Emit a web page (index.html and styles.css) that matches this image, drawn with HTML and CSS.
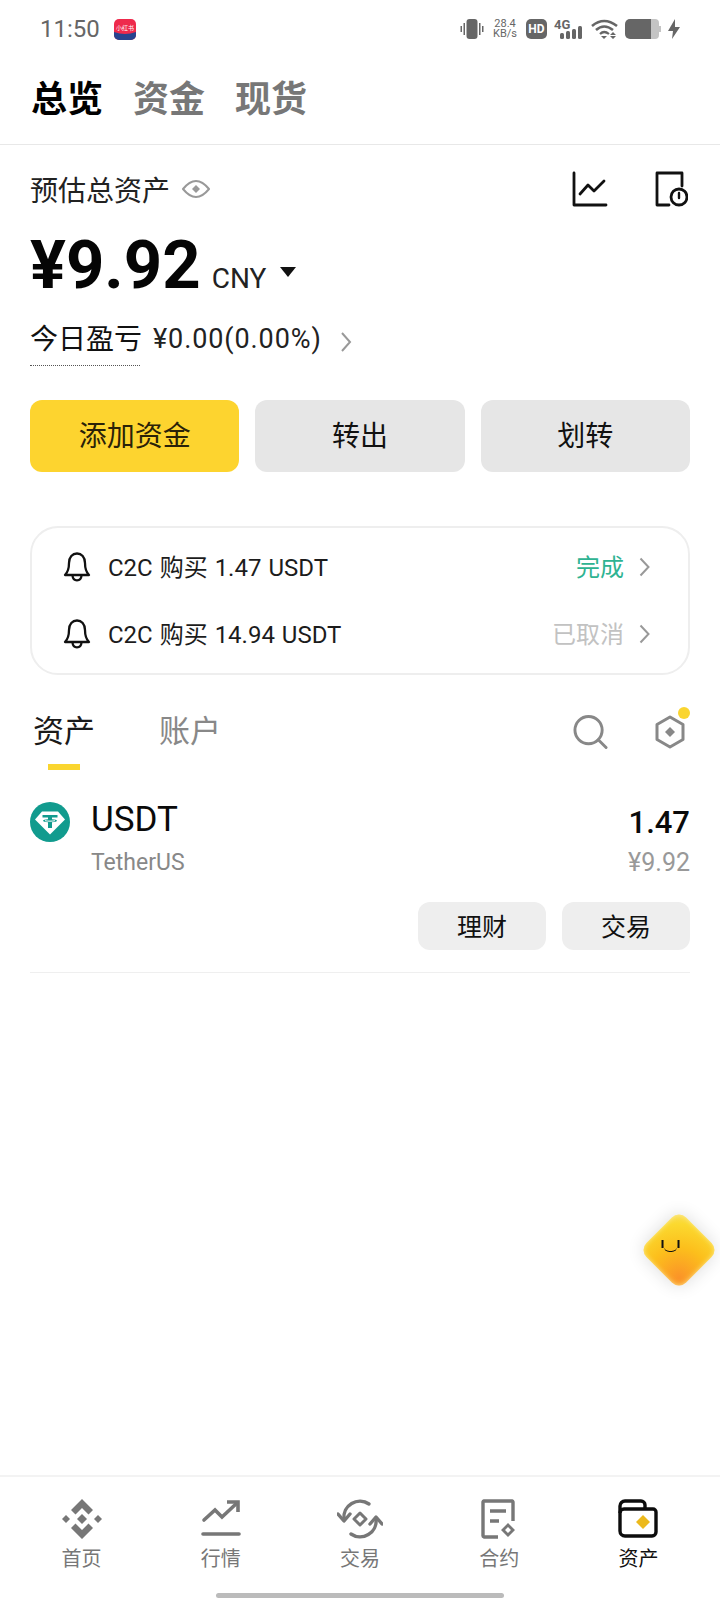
FILE: index.html
```html
<!DOCTYPE html>
<html lang="zh-CN">
<head>
    <meta charset="UTF-8">
    <meta name="viewport" content="width=device-width, initial-scale=1.0">
    <title>资产总览</title>
    <link rel="stylesheet" href="styles.css">
</head>
<body>
    <div class="status-bar">
        <span class="clock">11:50</span>
        <svg class="app-badge" width="22" height="21" viewBox="0 0 22 21">
            <rect width="22" height="21" rx="5" fill="#ee2a4c"/>
            <path d="M0 13 Q11 17 22 13 V16 A5 5 0 0 1 17 21 H5 A5 5 0 0 1 0 16Z" fill="#27448f"/>
            <text x="11" y="11" text-anchor="middle" class="app-badge-text">小红书</text>
        </svg>
        <div class="status-right">
            <svg width="24" height="20" viewBox="0 0 24 20" fill="#666">
                <rect x="6.5" y="0" width="11" height="20" rx="3"/>
                <rect x="0.5" y="7" width="1.5" height="6"/>
                <rect x="3.5" y="4" width="1.5" height="12"/>
                <rect x="19" y="4" width="1.5" height="12"/>
                <rect x="22" y="7" width="1.5" height="6"/>
            </svg>
            <div class="net-speed"><span>28.4</span><span>KB/s</span></div>
            <div class="hd-badge">HD</div>
            <svg width="30" height="28" viewBox="0 -4 30 28" fill="#666">
                <text x="0" y="10" class="net-type">4G</text>
                <rect x="6" y="14" width="4" height="6" rx="1.5"/>
                <rect x="12" y="12" width="4" height="8" rx="1.5"/>
                <rect x="18" y="10" width="4" height="10" rx="1.5"/>
                <rect x="24" y="7" width="4" height="13" rx="1.5"/>
            </svg>
            <svg width="27" height="20" viewBox="0 0 27 20" fill="none" stroke="#666" stroke-width="2.6">
                <path d="M1 7 Q13 -3 26 7"/>
                <path d="M5 11 Q13 4 22 11"/>
                <path d="M9 15 Q13 11 18 15" stroke-width="2.2"/>
                <path d="M10 17 H16 L13 20Z" fill="#666" stroke="none"/>
                <path d="M22 13 L25 16 H19Z M19 17 H25 L22 20Z" fill="#666" stroke="none"/>
            </svg>
            <svg width="36" height="20" viewBox="0 0 36 20">
                <path d="M26 0 H5 A5 5 0 0 0 0 5 V15 A5 5 0 0 0 5 20 H26Z" fill="#666"/>
                <path d="M26 0 H30 A4 4 0 0 1 34 4 V7 H36 V13 H34 V16 A4 4 0 0 1 30 20 H26Z" fill="#c4c4c4"/>
            </svg>
            <svg width="12" height="20" viewBox="0 0 12 20" fill="#666">
                <path d="M7 0 L0 12 H5 L4 20 L12 8 H7Z"/>
            </svg>
        </div>
    </div>

    <nav class="top-tabs">
        <span class="top-tab active">总览</span>
        <span class="top-tab">资金</span>
        <span class="top-tab">现货</span>
    </nav>

    <main class="content">
        <section class="summary">
            <div class="summary-head">
                <div class="summary-title">
                    <span>预估总资产</span>
                    <svg width="28" height="22" viewBox="0 0 28 22" fill="none" stroke="#999" stroke-width="2">
                        <path d="M1 11 Q14 -5 27 11 Q14 27 1 11Z"/>
                        <path d="M14 7 L18 11 L14 15 L10 11Z" fill="#999" stroke="none"/>
                    </svg>
                </div>
                <div class="summary-icons">
                    <svg width="36" height="36" viewBox="0 0 36 36" fill="none" stroke="#111" stroke-width="2.8" stroke-linecap="round" stroke-linejoin="round">
                        <path d="M2 2 V34 H34"/>
                        <path d="M8 23 L16 14 L22 20 L32 10"/>
                    </svg>
                    <svg width="34" height="36" viewBox="0 0 34 36" fill="none" stroke="#111" stroke-width="2.8" stroke-linecap="round" stroke-linejoin="round">
                        <path d="M15 34 H3 V2 H28 V15"/>
                        <circle cx="25" cy="26" r="8"/>
                        <path d="M25 22 V27" stroke-width="2.4"/>
                    </svg>
                </div>
            </div>
            <div class="balance">
                <span class="balance-value">¥9.92</span>
                <span class="balance-unit">CNY</span>
                <span class="balance-caret"></span>
            </div>
            <div class="pnl">
                <span class="pnl-label">今日盈亏</span>
                <span class="pnl-value">¥0.00(0.00%)</span>
                <svg width="12" height="22" viewBox="0 0 12 22" fill="none" stroke="#999" stroke-width="2"><path d="M2 2 L10 11 L2 20"/></svg>
            </div>
            <div class="actions">
                <button class="action primary">添加资金</button>
                <button class="action">转出</button>
                <button class="action">划转</button>
            </div>
        </section>

        <section class="orders">
            <div class="order">
                <svg width="28" height="30" viewBox="0 0 28 30" fill="none" stroke="#111" stroke-width="2.3" stroke-linejoin="round">
                    <path d="M2 23 C6 19 6 15 6 11 C6 5 9.5 1.5 14 1.5 C18.5 1.5 22 5 22 11 C22 15 22 19 26 23Z"/>
                    <path d="M9.5 23.5 C10 30 18 30 18.5 23.5"/>
                </svg>
                <span class="order-text">C2C 购买 1.47 USDT</span>
                <span class="order-status done">完成</span>
                <svg width="11" height="20" viewBox="0 0 11 20" fill="none" stroke="#999" stroke-width="2"><path d="M1.5 1.5 L9.5 10 L1.5 18.5"/></svg>
            </div>
            <div class="order">
                <svg width="28" height="30" viewBox="0 0 28 30" fill="none" stroke="#111" stroke-width="2.3" stroke-linejoin="round">
                    <path d="M2 23 C6 19 6 15 6 11 C6 5 9.5 1.5 14 1.5 C18.5 1.5 22 5 22 11 C22 15 22 19 26 23Z"/>
                    <path d="M9.5 23.5 C10 30 18 30 18.5 23.5"/>
                </svg>
                <span class="order-text">C2C 购买 14.94 USDT</span>
                <span class="order-status">已取消</span>
                <svg width="11" height="20" viewBox="0 0 11 20" fill="none" stroke="#999" stroke-width="2"><path d="M1.5 1.5 L9.5 10 L1.5 18.5"/></svg>
            </div>
        </section>

        <div class="asset-tabs">
            <span class="asset-tab active">资产</span>
            <span class="asset-tab">账户</span>
            <div class="asset-tools">
                <svg width="35" height="36" viewBox="0 0 36 36" fill="none" stroke="#888" stroke-width="3" stroke-linecap="round">
                    <circle cx="16" cy="16" r="14"/>
                    <path d="M26 26 L34 34"/>
                </svg>
                <div class="hex-tool">
                    <svg width="30" height="34" viewBox="0 0 30 34" fill="none" stroke="#888" stroke-width="3" stroke-linejoin="round">
                        <path d="M15 2 L28 9.5 V24.5 L15 32 L2 24.5 V9.5Z"/>
                        <path d="M15 12 L20 17 L15 22 L10 17Z" fill="#888" stroke="none"/>
                    </svg>
                    <span class="hex-dot"></span>
                </div>
            </div>
        </div>

        <section class="asset">
            <div class="asset-row">
                <svg class="coin" width="40" height="40" viewBox="0 0 40 40">
                    <circle cx="20" cy="20" r="20" fill="#119b8e"/>
                    <path d="M12 9.5 H28 L35 17.5 L20 32.5 L5 17.5Z" fill="#fff"/>
                    <path d="M12.5 13 H27.5 V15.5 H22 V17.3 C25 17.5 27 18 27 18.8 C27 19.6 25 20.1 22 20.3 V26 H18 V20.3 C15 20.1 13 19.6 13 18.8 C13 18 15 17.5 18 17.3 V15.5 H12.5Z" fill="#119b8e"/>
                    <path d="M15 18.7 C17 19.3 23 19.3 25 18.7" fill="none" stroke="#fff" stroke-width="1"/>
                </svg>
                <div class="asset-name">
                    <div class="asset-symbol">USDT</div>
                    <div class="asset-full">TetherUS</div>
                </div>
                <div class="asset-amount">
                    <div class="asset-qty">1.47</div>
                    <div class="asset-fiat">¥9.92</div>
                </div>
            </div>
            <div class="asset-actions">
                <button class="chip">理财</button>
                <button class="chip">交易</button>
            </div>
        </section>
    </main>

    <div class="assistant">
        <div class="assistant-face">
            <span class="eye"></span><span class="eye"></span>
            <span class="smile"></span>
        </div>
    </div>

    <nav class="bottom-nav">
        <div class="nav-item">
            <svg width="40" height="40" viewBox="0 0 40 40" fill="#777">
                <polygon points="20,0 31,11 26.5,15.5 20,9 13.5,15.5 9,11"/>
                <polygon points="20,40 31,29 26.5,24.5 20,31 13.5,24.5 9,29"/>
                <polygon points="4,16 8,20 4,24 0,20"/>
                <polygon points="36,16 40,20 36,24 32,20"/>
                <polygon points="20,15 25,20 20,25 15,20"/>
            </svg>
            <span>首页</span>
        </div>
        <div class="nav-item">
            <svg width="40" height="40" viewBox="0 0 40 40" fill="none" stroke="#777" stroke-width="3.6" stroke-linecap="round">
                <path d="M3 21 L14 11 L21 18 L36 4"/>
                <path d="M26 3 H37 V13" stroke-linecap="butt"/>
                <path d="M2 35 H38"/>
            </svg>
            <span>行情</span>
        </div>
        <div class="nav-item">
            <svg width="46" height="40" viewBox="0 0 46 40" fill="none" stroke="#777" stroke-width="3.4" stroke-linecap="round">
                <path d="M7 20 A16 16 0 0 1 32 5"/>
                <path d="M39 20 A16 16 0 0 1 14 35"/>
                <path d="M1 15 L7 22 L13 15" stroke-linejoin="round"/>
                <path d="M33 25 L39 18 L45 25" stroke-linejoin="round"/>
                <path d="M23 14 L29 20 L23 26 L17 20Z" stroke-width="3" stroke-linejoin="round"/>
            </svg>
            <span>交易</span>
        </div>
        <div class="nav-item">
            <svg width="36" height="40" viewBox="0 0 36 40" fill="none" stroke="#777" stroke-width="3.4">
                <path d="M17 38 H3 A1.5 1.5 0 0 1 2 36.5 V3 A1.5 1.5 0 0 1 3 2 H31 A1.5 1.5 0 0 1 32 3 V22"/>
                <path d="M9 12 H25 M9 22 H18"/>
                <path d="M27 24 L34 31 L27 38 L20 31Z M27 28 L30 31 L27 34 L24 31Z" fill="#777" stroke="none" fill-rule="evenodd"/>
            </svg>
            <span>合约</span>
        </div>
        <div class="nav-item active">
            <svg width="40" height="40" viewBox="0 0 40 40" fill="none" stroke="#0c0c0c" stroke-width="3.4" stroke-linejoin="round">
                <path d="M2 14 V7 A5 5 0 0 1 7 2 H23 A4 4 0 0 1 27 6 V10"/>
                <path d="M2 14 A4 4 0 0 1 6 10 H35 A3 3 0 0 1 38 13 V33 A4 4 0 0 1 34 37 H7 A5 5 0 0 1 2 32Z"/>
                <path d="M25 16 L32 23 L25 30 L18 23Z" fill="#ecb91c" stroke="none"/>
            </svg>
            <span>资产</span>
        </div>
    </nav>
    <div class="home-bar"></div>
</body>
</html>
```

FILE: styles.css
```css
* {
    box-sizing: border-box;
}
body {
    margin: 0;
    width: 720px;
    height: 1600px;
    position: relative;
    overflow: hidden;
    background: #fff;
    color: #111;
    font-family: Roboto, "Noto Sans CJK SC", sans-serif;
    display: flex;
    flex-direction: column;
}
button {
    font-family: inherit;
    border: none;
    color: #111;
    padding: 0;
}

/* status bar */
.status-bar {
    height: 56px;
    padding: 2px 40px 0 40px;
    display: flex;
    align-items: center;
    color: #666;
}
.clock {
    font-size: 24px;
}
.app-badge {
    margin-left: 14px;
}
.app-badge-text {
    font-size: 6px;
    fill: #fff;
    font-family: "Noto Sans CJK SC", sans-serif;
}
.status-right {
    margin-left: auto;
    display: flex;
    align-items: center;
    gap: 7px;
}
.net-speed {
    display: flex;
    flex-direction: column;
    align-items: center;
    font-size: 11px;
    line-height: 10px;
    width: 28px;
}
.hd-badge {
    width: 21px;
    height: 20px;
    background: #666;
    color: #fff;
    border-radius: 5px;
    font-size: 12px;
    font-weight: 700;
    display: flex;
    align-items: center;
    justify-content: center;
}
.net-type {
    font-size: 13px;
    font-weight: 700;
}

/* top tabs */
.top-tabs {
    height: 89px;
    padding: 0 31px 8px;
    border-bottom: 1px solid #e8e8e8;
    display: flex;
    align-items: center;
    gap: 30px;
}
.top-tab {
    font-size: 36px;
    font-weight: 700;
    color: #777;
}
.top-tab.active {
    color: #000;
}

.content {
    flex: 1;
    padding: 0 30px;
}

/* balance summary */
.summary-head {
    height: 84px;
    padding-top: 4px;
    display: flex;
    align-items: center;
    justify-content: space-between;
}
.summary-title {
    display: flex;
    align-items: center;
    gap: 12px;
    font-size: 28px;
    color: #222;
}
.summary-icons {
    display: flex;
    align-items: center;
    gap: 46px;
    padding-right: 2px;
}
.balance {
    display: flex;
    align-items: baseline;
    height: 60px;
    margin-top: 6px;
}
.balance-value {
    font-size: 67px;
    line-height: 60px;
    font-weight: 700;
    color: #050505;
}
.balance-unit {
    font-size: 28px;
    margin-left: 11px;
    color: #222;
}
.balance-caret {
    margin-left: 14px;
    width: 0;
    height: 0;
    border-left: 8px solid transparent;
    border-right: 8px solid transparent;
    border-top: 10px solid #111;
    align-self: center;
    margin-top: 14px;
}
.pnl {
    height: 40px;
    margin-top: 24px;
    display: flex;
    align-items: center;
    font-size: 28px;
}
.pnl-label {
    width: 110px;
    height: 46px;
    line-height: 40px;
    margin-top: 7px;
    border-bottom: 1px dotted #555;
    white-space: nowrap;
}
.pnl-value {
    margin-left: 13px;
    font-size: 27px;
    letter-spacing: 0.9px;
    color: #222;
}
.pnl svg {
    margin-left: 18px;
    margin-top: 6px;
}
.actions {
    display: flex;
    gap: 16px;
    margin-top: 41px;
}
.action {
    flex: 1;
    height: 72px;
    padding-bottom: 5px;
    border-radius: 12px;
    background: #e6e6e6;
    font-size: 28px;
}
.action.primary {
    background: #fdd42f;
    color: #2a2208;
}

/* recent orders */
.orders {
    margin-top: 54px;
    height: 149px;
    border: 2px solid #eee;
    border-radius: 28px;
    padding: 5px 38px 5px 31px;
    display: flex;
    flex-direction: column;
    justify-content: center;
}
.order {
    height: 67px;
    display: flex;
    align-items: center;
}
.order-text {
    margin: 0 0 4px 17px;
    font-size: 24px;
    word-spacing: 1px;
    color: #1c1c1c;
}
.order-status {
    margin: 0 15px 4px auto;
    font-size: 24px;
    color: #c2c2c2;
}
.order-status.done {
    color: #2eb392;
}

/* asset tabs */
.asset-tabs {
    height: 104px;
    margin-top: 13px;
    display: flex;
    align-items: center;
    gap: 64px;
    padding: 0 0 24px 3px;
}
.asset-tab {
    font-size: 31px;
    color: #888;
    position: relative;
}
.asset-tab.active {
    color: #1a1a1a;
}
.asset-tab.active::after {
    content: "";
    position: absolute;
    left: 15px;
    right: 15px;
    bottom: -19px;
    height: 6px;
    background: #fad52f;
}
.asset-tools {
    margin-left: auto;
    display: flex;
    align-items: center;
    gap: 47px;
    padding: 8px 5px 0 0;
}
.hex-tool {
    position: relative;
    height: 34px;
}
.hex-dot {
    position: absolute;
    top: -8px;
    right: -5px;
    width: 12px;
    height: 12px;
    border-radius: 50%;
    background: #fad52f;
}

/* asset row */
.asset {
    padding-top: 8px;
    padding-bottom: 22px;
    border-bottom: 1px solid #efefef;
}
.asset-row {
    display: flex;
    align-items: flex-start;
}
.coin {
    margin-top: 2px;
    flex: none;
}
.asset-name {
    margin-left: 21px;
}
.asset-symbol {
    font-size: 35px;
    line-height: 40px;
    color: #0a0a0a;
}
.asset-full {
    font-size: 23px;
    line-height: 30px;
    margin-top: 8px;
    color: #888;
}
.asset-amount {
    margin-left: auto;
    text-align: right;
}
.asset-qty {
    font-size: 31px;
    font-weight: 500;
    line-height: 40px;
    margin-top: 3px;
    color: #0a0a0a;
}
.asset-fiat {
    font-size: 25px;
    line-height: 30px;
    margin-top: 5px;
    color: #999;
}
.asset-actions {
    display: flex;
    justify-content: flex-end;
    gap: 16px;
    margin-top: 24px;
}
.chip {
    width: 128px;
    height: 48px;
    padding-bottom: 3px;
    border-radius: 12px;
    background: #eee;
    font-size: 25px;
}

/* floating helper, sits over the page */
.assistant {
    position: absolute;
    left: 651px;
    top: 1222px;
    width: 56px;
    height: 56px;
    border-radius: 10px;
    transform: rotate(45deg);
    background: radial-gradient(circle at 85% 85%, #fb9328 0%, #fcbf1c 45%, #fbd92f 80%, #f9e06a 100%);
    box-shadow: 0 0 18px rgba(0, 0, 0, 0.14), inset 0 0 5px rgba(255, 240, 170, 0.8);
}
.assistant-face {
    position: absolute;
    left: 40%;
    top: 60%;
    width: 20px;
    height: 18px;
    transform: translate(-50%, -50%) rotate(-45deg);
}
.eye {
    position: absolute;
    top: -1px;
    width: 2px;
    height: 8px;
    background: #111;
}
.eye:first-child {
    left: 1px;
}
.eye:nth-child(2) {
    right: 1px;
}
.smile {
    position: absolute;
    left: 3px;
    top: 5px;
    width: 14px;
    height: 6px;
    border-bottom: 1.5px solid #111;
    border-radius: 0 0 8px 8px;
}

/* bottom nav */
.bottom-nav {
    height: 125px;
    border-top: 2px solid #f3f3f3;
    padding: 22px 12px 0;
    display: flex;
}
.nav-item {
    flex: 1;
    display: flex;
    flex-direction: column;
    align-items: center;
    font-size: 20px;
    color: #777;
}
.nav-item svg {
    height: 40px;
}
.nav-item span {
    margin-top: 5px;
    line-height: 30px;
}
.nav-item.active {
    color: #111;
}
.home-bar {
    position: absolute;
    left: 216px;
    bottom: 2px;
    width: 288px;
    height: 5px;
    border-radius: 3px;
    background: #bbb;
}
```
